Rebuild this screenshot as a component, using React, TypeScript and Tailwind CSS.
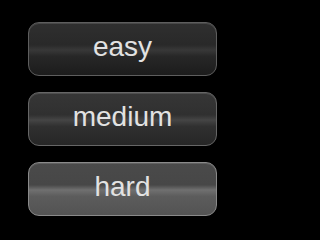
import React from 'react';

const levels = [
  {
    label: 'easy',
    className:
      'border-[#5e5e5e] bg-[linear-gradient(to_bottom,#2f2f2f_0%,#292929_42%,#383838_52%,#272727_64%,#1c1c1c_100%)]',
  },
  {
    label: 'medium',
    className:
      'border-[#666666] bg-[linear-gradient(to_bottom,#363636_0%,#303030_42%,#454545_52%,#303030_64%,#262626_100%)]',
  },
  {
    label: 'hard',
    className:
      'border-[#8a8a8a] bg-[linear-gradient(to_bottom,#4a4a4a_0%,#474747_42%,#707070_52%,#5c5c5c_64%,#535353_100%)]',
  },
];

export default function App() {
  return (
    <div className="min-h-screen w-full bg-black pt-[22px] pl-[28px]">
      <div className="flex flex-col gap-[16px]">
        {levels.map((level) => (
          <button
            key={level.label}
            type="button"
            className={`w-[189px] h-[54px] rounded-[11px] border-[1.5px] shadow-[inset_0_1px_0_rgba(255,255,255,0.12)] flex items-center justify-center pb-[4px] text-[28px] leading-none text-[#e2e2e2] font-['Liberation_Sans',Arial,sans-serif] ${level.className}`}
          >
            {level.label}
          </button>
        ))}
      </div>
    </div>
  );
}
